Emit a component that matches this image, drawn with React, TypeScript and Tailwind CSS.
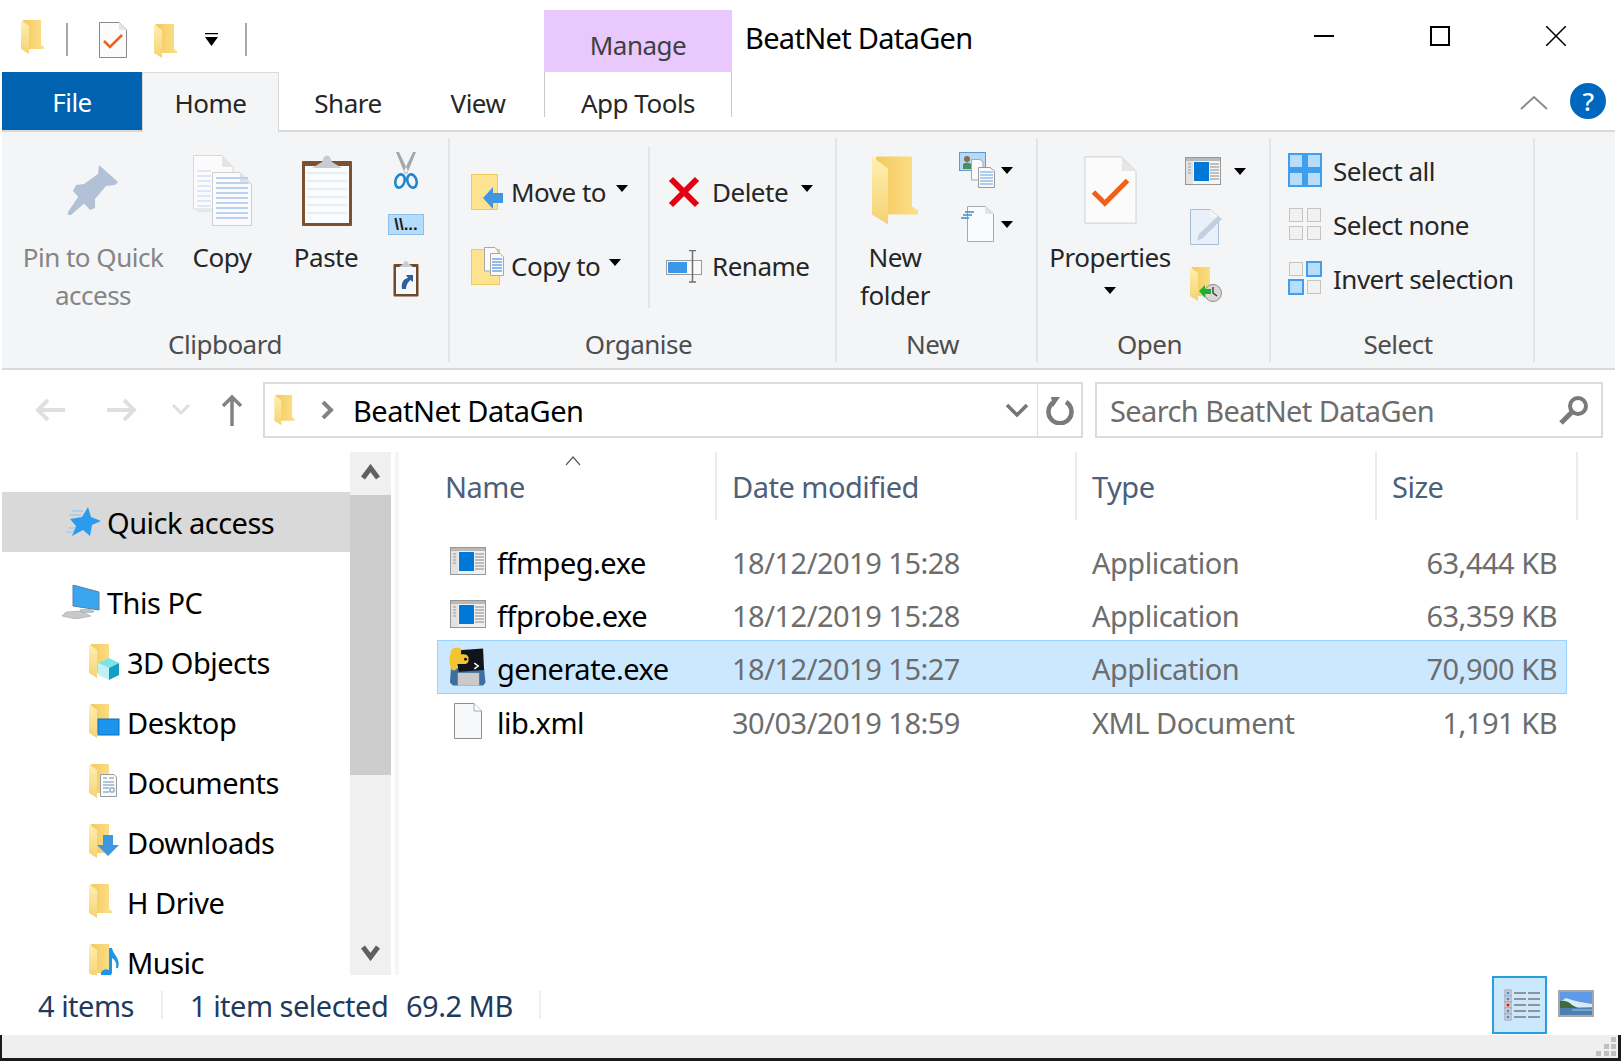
import type { ReactNode } from "react";

const Caret = ({ className = "" }: { className?: string }) => (
  <svg width="12" height="7" viewBox="0 0 12 7" className={className}>
    <path d="M0 0H12L6 7Z" fill="#000" />
  </svg>
);

const FolderShape = () => (
  <g>
    <path d="M2 0H20V25L23 27V29H7L2 27Z" fill="url(#folderBack)" />
    <path d="M0 0L8 6V34L0 29Z" fill="url(#folderFlap)" />
  </g>
);

const Folder = ({ className = "" }: { className?: string }) => (
  <svg width="23" height="34" viewBox="0 0 23 34" className={className}>
    <FolderShape />
  </svg>
);

const BigFolder = () => (
  <svg width="46" height="69" viewBox="0 0 23 34">
    <FolderShape />
  </svg>
);

const CheckDoc = ({ w, h, stroke }: { w: number; h: number; stroke: string }) => (
  <svg width={w} height={h} viewBox="0 0 28 36">
    <path d="M.5.5H20L27.5 8V35.5H.5Z" fill="#fbfbfb" stroke={stroke} vectorEffect="non-scaling-stroke" />
    <path d="M20 .5V8H27.5Z" fill="#e6e6e6" />
    <path d="M5 19L11 25L23 13" fill="none" stroke="#f0601a" strokeWidth="2.600" />
  </svg>
);

const PinIcon = () => (
  <svg width="50" height="50" viewBox="0 0 50 50">
    <path d="M31 0L50 17L47 20L38 21L27 34L27 43L22 45L5 26L8 20L16 19L30 9Z" fill="#b3c1d6" />
    <path d="M12 29L19 36L3 50H0V47Z" fill="#b3c1d6" />
  </svg>
);

const CopyIcon = () => (
  <svg width="59" height="71" viewBox="0 0 59 71">
    <path d="M.5.5H29L40 12V54H.5Z" fill="#fbfbfc" stroke="#d8d8d8" />
    <path d="M29 .5V12H40Z" fill="#e4e4e4" />
    {[8, 13, 18, 23, 28, 33, 38, 43, 48].map((y) => (
      <path key={y} d={`M4 ${y + 8}H18`} stroke="#dce7f7" strokeWidth="2" />
    ))}
    <path d="M19.5 17.5H47L58.5 29V70.5H19.5Z" fill="#fbfbfc" stroke="#cfcfcf" />
    <path d="M47 17.5V29H58.5Z" fill="#e0e0e0" />
    {[23, 28, 33, 38, 43, 48, 53, 58, 63].map((y) => (
      <path key={y} d={`M23 ${y}H55`} stroke="#b9d2f4" strokeWidth="2" />
    ))}
  </svg>
);

const PasteIcon = () => (
  <svg width="50" height="71" viewBox="0 0 50 71" className="ml-[2px]">
    <rect x="0" y="6" width="50" height="65" rx="1" fill="#7a5230" />
    <rect x="3" y="11" width="44" height="57" fill="#fafbfc" />
    {[18, 26, 34, 42, 50, 58].map((y) => (
      <path key={y} d={`M5 ${y}H45`} stroke="#e2eaf4" strokeWidth="1.500" />
    ))}
    <path d="M10 13L20 7L22 2Q25 -1 28 2L30 7L40 13Z" fill="#c8ccd2" />
  </svg>
);

const ScissorsIcon = () => (
  <svg width="26" height="37" viewBox="0 0 26 37">
    <path d="M3 0L6 0L15 19L12 22ZM23 0L20 0L11 19L14 22Z" fill="#a4a8ae" />
    <ellipse cx="7" cy="29" rx="4.500" ry="6.800" fill="none" stroke="#1f86cf" strokeWidth="2.600" transform="rotate(16 7 29)" />
    <ellipse cx="19" cy="29" rx="4.500" ry="6.800" fill="none" stroke="#1f86cf" strokeWidth="2.600" transform="rotate(-16 19 29)" />
  </svg>
);

const PathIcon = () => (
  <div className="w-[36px] h-[21px] border border-[#8cc0ea] bg-[#b5dcfb] flex items-center justify-center text-[17px] tracking-normal leading-none font-bold text-[#1a1a1a] font-['Liberation_Sans',sans-serif]">
    \\...
  </div>
);

const PasteShortcutIcon = () => (
  <svg width="26" height="37" viewBox="0 0 26 37">
    <rect x=".5" y="4" width="25" height="32.5" rx="1" fill="#6d4a2d" />
    <rect x="3" y="7" width="20" height="27" fill="#f6f7f8" />
    <path d="M6 7L11 3L12 1H14L15 3L20 7Z" fill="#c8ccd2" />
    <path d="M9 29C8 23 10 19 15 18L13 15H20V22L17.500 20C15 22 13 25 13 29Z" fill="#2f5f9e" />
  </svg>
);

const MoveToIcon = () => (
  <svg width="32" height="36" viewBox="0 0 32 36">
    <rect x=".5" y=".5" width="26" height="35" fill="#fde28f" stroke="#efc95d" />
    <path d="M12 24L22 13V19H32V29H22V35Z" fill="#3f97e3" />
  </svg>
);

const CopyToIcon = () => (
  <svg width="33" height="38" viewBox="0 0 33 38">
    <rect x=".5" y="2.500" width="28" height="35" fill="#fde28f" stroke="#efc95d" />
    <path d="M13.500.5H24L27 4V24H13.500Z" fill="#fafafa" stroke="#a8a8a8" />
    <path d="M19.500 6.500H29L32.500 10V28.500H19.500Z" fill="#fafafa" stroke="#a8a8a8" />
    {[12, 15, 18, 21, 24].map((y) => (
      <path key={y} d={`M21 ${y}H31`} stroke="#6fa5e6" strokeWidth="1.500" />
    ))}
  </svg>
);

const DeleteIcon = () => (
  <svg width="32" height="32" viewBox="0 0 32 32">
    <path d="M3 3L29 29M29 3L3 29" stroke="#e3000f" strokeWidth="6" />
  </svg>
);

const RenameIcon = () => (
  <svg width="36" height="33" viewBox="0 0 36 33">
    <rect x=".5" y="10.500" width="35" height="14" fill="#fafafa" stroke="#9a9a9a" />
    <rect x="2" y="12" width="19" height="11" fill="#3b98e8" />
    <path d="M23 .5H30M26.500 .5V32M23 32H30" stroke="#6f6f6f" strokeWidth="1.500" fill="none" />
  </svg>
);

const SharePeopleIcon = () => (
  <svg width="36" height="36" viewBox="0 0 36 36">
    <rect x=".5" y=".5" width="26" height="18" fill="#b8d9f2" stroke="#5f9ccf" />
    <circle cx="8" cy="7" r="3" fill="#8a6a50" />
    <path d="M4 17V12Q8 9 12 12V17Z" fill="#4f8c5c" />
    <path d="M12.500 7.500H21L24 10V28H12.500Z" fill="#fafafa" stroke="#a8a8a8" />
    <path d="M19.500 15.500H31L35.500 19V35.500H19.500Z" fill="#fafafa" stroke="#9a9a9a" />
    {[20, 23, 26, 29, 32].map((y) => (
      <path key={y} d={`M21 ${y}H34`} stroke="#86b3ea" strokeWidth="1.300" />
    ))}
  </svg>
);

const NewItemIcon = () => (
  <svg width="33" height="36" viewBox="0 0 33 36">
    <path d="M6.500.5H24L32.500 8V35.500H6.500Z" fill="#fafbfc" stroke="#a8a8a8" />
    <path d="M24 .5V8H32.500Z" fill="#e4e4e4" />
    <path d="M4 6H13M2 9H11M0 12H8" stroke="#4a86c5" strokeWidth="1.500" />
  </svg>
);

const AppWindowIcon = ({ fill = "#f0f0f0" }: { fill?: string }) => (
  <svg width="36" height="28" viewBox="0 0 36 28">
    <rect x=".5" y=".5" width="35" height="27" fill={fill} stroke="#979797" />
    <rect x="1" y="1" width="34" height="3" fill="#b9b9b9" />
    <rect x="1" y="4" width="7" height="23" fill="#e2e2e2" />
    <rect x="9" y="5" width="15" height="19" fill="#0078d7" />
    {[7, 10, 13, 16].map((y) => (
      <path key={y} d={`M3 ${y}H6`} stroke="#9a9a9a" />
    ))}
    {[7, 10, 13, 16, 19, 22].map((y) => (
      <path key={y} d={`M25 ${y}H34`} stroke="#8a8a8a" />
    ))}
  </svg>
);

const EditIcon = () => (
  <svg width="33" height="36" viewBox="0 0 33 36">
    <path d="M.5.5H20L28.500 8V35.500H.5Z" fill="#e8f0fa" stroke="#a9bcd6" />
    <path d="M20 .5V8H28.500Z" fill="#f6f6f6" />
    <path d="M7 32L9 25L28 7L32 10L13 29Z" fill="#c2cfdf" />
  </svg>
);

const HistoryIcon = () => (
  <svg width="32" height="35" viewBox="0 0 32 35">
    <FolderShape />
    <circle cx="23" cy="26" r="8.500" fill="#d7d7d7" stroke="#8d8d8d" />
    <path d="M23 20V26L27 29" stroke="#333" strokeWidth="1.300" fill="none" />
    <path d="M9 24L15 18V22H21V27H15V31Z" fill="#22ad2e" />
  </svg>
);

const SelectGrid = ({ on }: { on: boolean[] }) => (
  <div className={`grid grid-cols-[16px_16px] gap-[2px] w-[34px] ${on.every(Boolean) ? "bg-[#3f9fec]" : ""}`}>
    {on.map((active, i) =>
      active ? (
        <div key={i} className="h-[16px] border-2 border-[#3f9fec] bg-[#b8ddfb]" />
      ) : (
        <div key={i} className="h-[14px] w-[14px] m-[1px] border border-[#c4c4c4] bg-[#f1f1f1]" />
      ),
    )}
  </div>
);

const StarIcon = () => (
  <svg width="36" height="30" viewBox="0 0 36 30">
    <path d="M23 0L26 10L36 14L27 18L25 29L18 23L7 29L11 19L5 12L17 10Z" fill="#2b9bf0" />
    <path d="M7 4H18M4 8H16M3 21H11M1 25H9" stroke="#8cc5f2" strokeWidth="1" />
  </svg>
);

const PcIcon = () => (
  <svg width="38" height="34" viewBox="0 0 38 34">
    <path d="M11 0L37 7V25L11 21Z" fill="#3aa6f2" stroke="#5f7f96" />
    <path d="M18 24H32V28H18Z" fill="#bcc4cb" />
    <path d="M4 27L18 26L29 31L14 34L0 31Z" fill="#c9c9c9" stroke="#999" strokeWidth=".5" />
  </svg>
);

const NavOverlay = ({ children }: { children?: ReactNode }) => (
  <svg width="36" height="36" viewBox="0 0 36 36">
    <FolderShape />
    {children}
  </svg>
);

const navItems: { label: string; overlay: ReactNode }[] = [
  {
    label: "3D Objects",
    overlay: (
      <g>
        <path d="M9 19L20 14L30 19L20 24Z" fill="#7ce3ea" />
        <path d="M9 19V31L20 36V24Z" fill="#c3f0f3" />
        <path d="M30 19V31L20 36V24Z" fill="#12a0c0" />
      </g>
    ),
  },
  { label: "Desktop", overlay: <rect x="9" y="15" width="21" height="16" fill="#1a94ec" stroke="#0d6fb8" /> },
  {
    label: "Documents",
    overlay: (
      <g>
        <path d="M11.500 10.500H25L27.500 13V32.500H11.500Z" fill="#fafafa" stroke="#9a9a9a" />
        <path d="M14 14H18M20 14H25M14 18H25M14 21H25M14 24H20M21 24H25V28H21ZM14 28H20" stroke="#6b8fb3" fill="none" />
      </g>
    ),
  },
  { label: "Downloads", overlay: <path d="M14 11H24V21H30L19 32L8 21H14Z" fill="#3f97e3" /> },
  { label: "H Drive", overlay: null },
  {
    label: "Music",
    overlay: (
      <g>
        <path d="M20 4H23C24 11 32 14 29 24L27 24C28 19 26 16 23 14V29Q21 34 15 33Q10 31 13 27Q16 24 20 26Z" fill="#1a94ec" />
      </g>
    ),
  },
];

function PythonIcon() {
  return (
    <svg width="38" height="40" viewBox="0 0 38 40">
      <path d="M2 21H36L37.500 36L35 39H4L1 36Z" fill="#3c6f9f" />
      <rect x="9" y="26" width="22" height="13" fill="#c9c9c9" />
      <path d="M6 3L35 1L36 23L10 25Z" fill="#10151c" />
      <path d="M2 4Q3 0 9 0L12 1Q13 4 12 7H15Q19 7 20 10V14Q19 17 15 17H8V22Q5 25 2 22Q-1 14 2 4Z" fill="#f4c430" />
      <circle cx="17" cy="12" r="1.500" fill="#10151c" />
      <path d="M26 16L30 19L26 22" stroke="#fff" strokeWidth="1.500" fill="none" />
    </svg>
  );
}

function PageIcon() {
  return (
    <svg width="28" height="36" viewBox="0 0 28 36">
      <path d="M.5.5H20L27.500 8V35.500H.5Z" fill="#f7f8fa" stroke="#8f8f8f" />
      <path d="M20 .5V8H27.500" fill="#fff" stroke="#a8a8a8" />
    </svg>
  );
}

const files = [
  { name: "ffmpeg.exe", date: "18/12/2019 15:28", type: "Application", size: "63,444 KB", icon: <AppWindowIcon /> },
  { name: "ffprobe.exe", date: "18/12/2019 15:28", type: "Application", size: "63,359 KB", icon: <AppWindowIcon /> },
  { name: "generate.exe", date: "18/12/2019 15:27", type: "Application", size: "70,900 KB", icon: <PythonIcon />, selected: true },
  { name: "lib.xml", date: "30/03/2019 18:59", type: "XML Document", size: "1,191 KB", icon: <PageIcon /> },
];

const BigButton = ({
  width,
  icon,
  lines,
  muted,
}: {
  width: string;
  icon: ReactNode;
  lines: string[];
  muted?: boolean;
}) => (
  <div className={`${width} flex flex-col items-center pt-[12px]`}>
    <div className="h-[80px] flex items-center justify-center">{icon}</div>
    <div className={`mt-[8px] leading-[38px] text-center ${muted ? "text-[#858585]" : "text-[#262626]"}`}>
      {lines.map((line) => (
        <div key={line}>{line}</div>
      ))}
    </div>
  </div>
);

const RibbonGroup = ({
  width,
  label,
  labelPad = "pr-[8px]",
  children,
}: {
  width: string;
  label: string;
  labelPad?: string;
  children: ReactNode;
}) => (
  <div className={`${width} h-[224px] shrink-0 flex flex-col border-r-2 border-[#e2e4e7]`}>
    <div className="flex h-[190px]">{children}</div>
    <div className={`h-[34px] pb-[3px] ${labelPad} flex items-center justify-center text-[#4d4d4d]`}>{label}</div>
  </div>
);

const ActionRow = ({ icon, label, caretGap }: { icon: ReactNode; label: string; caretGap: string }) => (
  <div className="h-[74px] flex items-center text-[#262626]">
    <div className="w-[40px]">{icon}</div>
    <span>{label}</span>
    <Caret className={`${caretGap} mb-[8px]`} />
  </div>
);

const SmallRow = ({
  height,
  icon,
  caret,
  caretGap = "",
}: {
  height: string;
  icon: ReactNode;
  caret?: boolean;
  caretGap?: string;
}) => (
  <div className={`${height} flex items-center`}>
    <div className="w-[48px] flex justify-center">{icon}</div>
    {caret && <Caret className={caretGap} />}
  </div>
);

const Ribbon = () => (
  <div className="w-[1613px] h-[238px] pt-[6px] flex bg-[#f4f5f7] border-b-2 border-[#d9d9d9] text-[26px]">
    <RibbonGroup width="w-[448px]" label="Clipboard" labelPad="pr-0">
      <BigButton width="w-[182px]" icon={<PinIcon />} lines={["Pin to Quick", "access"]} muted />
      <BigButton width="w-[76px]" icon={<CopyIcon />} lines={["Copy"]} />
      <BigButton width="w-[132px]" icon={<PasteIcon />} lines={["Paste"]} />
      <div className="w-[28px] pt-[5px] flex flex-col items-center">
        <div className="h-[54px] flex items-center"><ScissorsIcon /></div>
        <div className="h-[54px] flex items-center"><PathIcon /></div>
        <div className="h-[54px] flex items-center"><PasteShortcutIcon /></div>
      </div>
    </RibbonGroup>

    <RibbonGroup width="w-[387px]" label="Organise">
      <div className="w-[198px] pl-[21px] pt-[17px]">
        <ActionRow icon={<MoveToIcon />} label="Move to" caretGap="ml-[10px]" />
        <ActionRow icon={<CopyToIcon />} label="Copy to" caretGap="ml-[9px]" />
      </div>
      <div className="w-[2px] h-[161px] mt-[9px] bg-[#e2e4e7]" />
      <div className="pl-[16px] pt-[17px]">
        <div className="h-[74px] flex items-center text-[#262626]">
          <div className="w-[46px] pl-[2px]"><DeleteIcon /></div>
          <span>Delete</span>
          <Caret className="ml-[13px] mb-[8px]" />
        </div>
        <div className="h-[74px] flex items-center text-[#262626]">
          <div className="w-[46px]"><RenameIcon /></div>
          <span>Rename</span>
        </div>
      </div>
    </RibbonGroup>

    <RibbonGroup width="w-[201px]" label="New">
      <BigButton width="w-[116px]" icon={<BigFolder />} lines={["New", "folder"]} />
      <div className="pt-[5px]">
        <SmallRow height="h-[54px]" icon={<SharePeopleIcon />} caret />
        <SmallRow height="h-[54px]" icon={<NewItemIcon />} caret />
      </div>
    </RibbonGroup>

    <RibbonGroup width="w-[233px]" label="Open">
      <div className="w-[144px] flex flex-col items-center pt-[12px]">
        <div className="h-[80px] flex items-center"><CheckDoc w={53} h={70} stroke="#d0d0d0" /></div>
        <div className="mt-[8px] leading-[38px] text-[#262626]">Properties</div>
        <Caret className="mt-[11px]" />
      </div>
      <div className="pt-[5px]">
        <SmallRow
          height="h-[56px]"
          icon={<div className="mr-[6px]"><AppWindowIcon fill="#f4f5f7" /></div>}
          caret
          caretGap="ml-[4px]"
        />
        <SmallRow height="h-[56px]" icon={<EditIcon />} />
        <SmallRow height="h-[58px]" icon={<HistoryIcon />} />
      </div>
    </RibbonGroup>

    <RibbonGroup width="w-[264px]" label="Select">
      <div className="pl-[17px] pt-[5px] text-[#262626]">
        {[
          { label: "Select all", on: [true, true, true, true] },
          { label: "Select none", on: [false, false, false, false] },
          { label: "Invert selection", on: [false, true, true, false] },
        ].map((row) => (
          <div key={row.label} className="h-[54px] flex items-center gap-[11px]">
            <SelectGrid on={row.on} />
            <span className="pt-[2px]">{row.label}</span>
          </div>
        ))}
      </div>
    </RibbonGroup>
  </div>
);

const TitleBar = () => (
  <div className="h-[72px] flex">
    <div className="w-[544px] shrink-0 pl-[21px] pt-[20px] flex items-start">
      <Folder />
      <div className="ml-[22px] mt-[3px] w-[2px] h-[33px] bg-[#a8a8a8]" />
      <div className="ml-[31px] mt-[2px]"><CheckDoc w={28} h={36} stroke="#8a8a8a" /></div>
      <div className="ml-[27px] mt-[4px]"><Folder /></div>
      <svg width="13" height="13" viewBox="0 0 13 13" className="ml-[28px] mt-[13px]">
        <path d="M0 .5H13" stroke="#000" strokeWidth="1.500" />
        <path d="M0 4H13L6.500 13Z" fill="#000" />
      </svg>
      <div className="ml-[27px] mt-[3px] w-[2px] h-[33px] bg-[#a8a8a8]" />
    </div>
    <div className="w-[188px] h-[62px] mt-[10px] bg-[#e9c9fd] flex items-center justify-center pt-[7px] text-[26px] text-[#404040]">
      Manage
    </div>
    <div className="pl-[13px] pt-[14px] leading-[48px] tracking-[-0.7px] text-black">BeatNet DataGen</div>
    <div className="ml-auto h-[72px] flex pr-[7px]">
      <div className="w-[116px] flex items-center justify-center pb-[1px]">
        <div className="w-[20px] h-[2px] bg-black" />
      </div>
      <div className="w-[116px] flex items-center justify-center pb-[1px]">
        <div className="w-[20px] h-[20px] border-2 border-black" />
      </div>
      <div className="w-[116px] flex items-center justify-center pb-[1px]">
        <svg width="20" height="20" viewBox="0 0 20 20">
          <path d="M0 0L20 20M20 0L0 20" stroke="#000" strokeWidth="1.500" />
        </svg>
      </div>
    </div>
  </div>
);

const TabRow = () => (
  <div className="h-[60px] w-[1613px] flex border-b-2 border-[#d9d9d9] text-[#262626] text-[26px]">
    <div className="w-[140px] h-[58px] bg-[#0063b1] text-white flex items-center justify-center pt-[2px]">File</div>
    <div className="w-[137px] h-[60px] bg-[#f4f5f7] border border-b-0 border-[#d9d9d9] flex items-center justify-center">
      Home
    </div>
    <div className="w-[138px] flex items-center justify-center pt-[4px]">Share</div>
    <div className="w-[122px] flex items-center justify-center pt-[4px]">View</div>
    <div className="ml-[5px] w-[188px] h-[45px] border-x border-[#c8c8c8] flex items-start justify-center">
      <span className="leading-[62px]">App Tools</span>
    </div>
    <div className="ml-auto flex items-start pt-[11px] pr-[9px]">
      <svg width="28" height="16" viewBox="0 0 28 16" className="mt-[12px] mr-[22px]">
        <path d="M1 14L14 2L27 14" fill="none" stroke="#8c8c8c" strokeWidth="2" />
      </svg>
      <div className="w-[36px] h-[36px] rounded-full bg-[#0067c0] text-white flex items-center justify-center text-[26px] font-medium leading-none">
        ?
      </div>
    </div>
  </div>
);

const AddressRow = () => (
  <div className="h-[82px] flex items-start pt-[12px]">
    <div className="w-[261px] h-[56px] flex items-center">
      <svg width="30" height="24" viewBox="0 0 30 24" className="ml-[33px]">
        <path d="M13 2L3 12L13 22M3 12H30" fill="none" stroke="#dfdfdf" strokeWidth="4" />
      </svg>
      <svg width="30" height="24" viewBox="0 0 30 24" className="ml-[42px]">
        <path d="M17 2L27 12L17 22M27 12H0" fill="none" stroke="#dfdfdf" strokeWidth="4" />
      </svg>
      <svg width="18" height="12" viewBox="0 0 18 12" className="ml-[35px]">
        <path d="M1 1L9 9L17 1" fill="none" stroke="#dfdfdf" strokeWidth="3" />
      </svg>
      <svg width="22" height="31" viewBox="0 0 22 31" className="ml-[31px]">
        <path d="M2 11L11 2L20 11M11 2V31" fill="none" stroke="#838383" strokeWidth="3.500" />
      </svg>
    </div>
    <div className="w-[820px] h-[56px] border-2 border-[#dcdcdc] flex items-center">
      <Folder className="ml-[8px] scale-90" />
      <svg width="13" height="18" viewBox="0 0 13 18" className="ml-[25px]">
        <path d="M2 1L10 9L2 17" fill="none" stroke="#838383" strokeWidth="4" />
      </svg>
      <span className="ml-[19px] text-black">BeatNet DataGen</span>
      <svg width="24" height="14" viewBox="0 0 24 14" className="ml-auto mr-[8px]">
        <path d="M2 2L12 12L22 2" fill="none" stroke="#767676" strokeWidth="3.500" />
      </svg>
      <div className="w-[44px] h-[52px] border-l border-[#dcdcdc] flex items-center justify-center">
        <svg width="30" height="30" viewBox="0 0 30 30">
          <path d="M9 7A11.500 11.500 0 1 0 21 7" fill="none" stroke="#7a7a7a" strokeWidth="4.500" />
          <path d="M6 2L15 2L8 12Z" fill="#7a7a7a" />
        </svg>
      </div>
    </div>
    <div className="ml-[12px] w-[508px] h-[56px] border-2 border-[#dcdcdc] flex items-center justify-between pl-[13px] pr-[12px] text-[#6d6d6d]">
      <span className="tracking-[-0.6px]">Search BeatNet DataGen</span>
      <svg width="30" height="30" viewBox="0 0 30 30">
        <circle cx="19" cy="11" r="8" fill="none" stroke="#7a7a7a" strokeWidth="4" />
        <path d="M13 17L2 28" stroke="#7a7a7a" strokeWidth="5" />
      </svg>
    </div>
  </div>
);

const NavPane = () => (
  <div className="w-[348px] h-[523px] overflow-hidden pt-[40px] text-black shrink-0">
    <div className="h-[60px] bg-[#d9d9d9] flex items-center pl-[63px]">
      <StarIcon />
      <span className="ml-[6px]">Quick access</span>
    </div>
    <div className="h-[60px] mt-[20px] flex items-center pl-[60px]">
      <PcIcon />
      <span className="ml-[7px]">This PC</span>
    </div>
    {navItems.map((item) => (
      <div key={item.label} className="h-[60px] flex items-center pl-[87px]">
        <NavOverlay>{item.overlay}</NavOverlay>
        <span className="ml-[2px]">{item.label}</span>
      </div>
    ))}
  </div>
);

const Scrollbar = () => (
  <div className="w-[41px] h-[523px] shrink-0 bg-[#f0f0f0] flex flex-col items-center">
    <div className="h-[43px] flex items-center pb-[4px]">
      <svg width="19" height="16" viewBox="0 0 19 16">
        <path d="M2 14L9.500 4L17 14" fill="none" stroke="#606060" strokeWidth="5" />
      </svg>
    </div>
    <div className="w-full h-[280px] bg-[#cdcdcd]" />
    <div className="mt-auto h-[44px] flex items-center">
      <svg width="19" height="16" viewBox="0 0 19 16">
        <path d="M2 2L9.500 12L17 2" fill="none" stroke="#606060" strokeWidth="5" />
      </svg>
    </div>
  </div>
);

const FileList = () => (
  <div className="flex-1 min-w-0">
    <div className="h-[68px] flex text-[#4c607a] relative">
      <svg width="16" height="10" viewBox="0 0 16 10" className="absolute left-[166px] top-[4px]">
        <path d="M1 9L8 1L15 9" fill="none" stroke="#5a5a5a" strokeWidth="1.200" />
      </svg>
      <div className="w-[318px] pl-[46px] pt-[10px] border-r-2 border-[#ececec] leading-[50px]">Name</div>
      <div className="w-[360px] pl-[15px] pt-[10px] border-r-2 border-[#ececec] leading-[50px]">Date modified</div>
      <div className="w-[300px] pl-[15px] pt-[10px] border-r-2 border-[#ececec] leading-[50px]">Type</div>
      <div className="w-[201px] pl-[15px] pt-[10px] border-r-2 border-[#ececec] leading-[50px]">Size</div>
    </div>
    <div className="ml-[38px] w-[1130px] mt-[14px]">
      {files.map((file) => (
        <div
          key={file.name}
          className={`flex items-center border ${file.selected ? "bg-[#cce8ff] border-[#99d1ff] h-[54px]" : "border-transparent h-[53px]"}`}
        >
          <div className="w-[294px] shrink-0 flex items-center text-black">
            <div className="w-[59px] pl-[11px] pr-[11px] flex justify-center">{file.icon}</div>
            <span className="pt-[3px]">{file.name}</span>
          </div>
          <div className="w-[360px] shrink-0 pt-[3px] text-[#6d6d6d]">{file.date}</div>
          <div className="w-[264px] shrink-0 pt-[3px] text-[#6d6d6d]">{file.type}</div>
          <div className="flex-1 pr-[9px] pt-[3px] text-right text-[#6d6d6d]">{file.size}</div>
        </div>
      ))}
    </div>
  </div>
);

const StatusBar = () => (
  <div className="h-[60px] flex items-center pl-[36px] text-[#1f3a5f] w-[1616px] relative">
    <span className="w-[123px]">4 items</span>
    <div className="w-[2px] h-[28px] bg-[#eeeeee]" />
    <span className="ml-[27px] w-[216px]">1 item selected</span>
    <span className="w-[133px]">69.2 MB</span>
    <div className="w-[2px] h-[28px] bg-[#eeeeee]" />
    <div className="ml-auto mr-[71px] w-[55px] h-[58px] pl-[4px] border-2 border-[#26a0da] bg-[#cce8ff] flex items-center justify-center">
      <svg width="36" height="32" viewBox="0 0 36 32">
        {[1, 7, 13, 19, 25].map((y, i) => (
          <g key={y}>
            <rect x="1" y={y} width="6" height="6" fill="#f4f4f4" stroke="#9a9a9a" />
            <rect x="2.500" y={y + 1.500} width="3" height="3" fill={i === 2 ? "#c8281e" : "#4a8fd0"} />
            <path d={`M10 ${y + 3}H22M24 ${y + 3}H36`} stroke="#7a7a7a" strokeWidth="1.500" />
          </g>
        ))}
      </svg>
    </div>
    <svg width="36" height="27" viewBox="0 0 36 27" className="absolute left-[1556px] top-[15px]">
      <rect x="1" y="1" width="34" height="25" fill="#5e9ae8" stroke="#a8a8a8" strokeWidth="2" />
      <path d="M2 12L8 8L14 10L22 12L34 14V17L2 18Z" fill="#dbeaf7" />
      <path d="M2 11Q9 10 14 15L20 18H2Z" fill="#3d6b3f" />
      <rect x="2" y="18" width="32" height="7" fill="#4d7fb2" />
      <path d="M14 20H34" stroke="#a8c4dd" />
    </svg>
  </div>
);

const App = () => {
  return (
    <div className="relative w-[1621px] h-[1061px] overflow-hidden bg-white text-[29px] tracking-[-0.5px] leading-none font-['Noto_Sans',sans-serif]">
      <svg width="0" height="0" className="absolute">
        <defs>
          <linearGradient id="folderBack" x1="0" y1="0" x2="1" y2="0">
            <stop offset="0" stopColor="#f3c95e" />
            <stop offset="1" stopColor="#fde08a" />
          </linearGradient>
          <linearGradient id="folderFlap" x1="0" y1="0" x2="0" y2="1">
            <stop offset="0" stopColor="#fff0b2" />
            <stop offset="1" stopColor="#f5d272" />
          </linearGradient>
        </defs>
      </svg>
      <TitleBar />
      <div className="pl-[2px]">
        <TabRow />
        <Ribbon />
        <AddressRow />
        <div className="flex h-[523px]">
          <NavPane />
          <Scrollbar />
          <div className="ml-[4px] w-[4px] bg-[#f5f5f5] shrink-0" />
          <FileList />
        </div>
        <StatusBar />
      </div>
      <div className="h-[26px] pl-[2px] pr-[3px] pb-[3px] bg-[#1a1a1a]">
        <div className="h-full bg-[#efefef] flex justify-end pr-[2px] pt-[2px]">
          <svg width="20" height="20" viewBox="0 0 20 20">
            <path d="M15 0H20V5H15ZM8 7H13V12H8ZM15 7H20V12H15ZM0 14H5V19H0ZM8 14H13V19H8ZM15 14H20V19H15Z" fill="#c0c0c0" />
          </svg>
        </div>
      </div>
    </div>
  );
};

export default App;
